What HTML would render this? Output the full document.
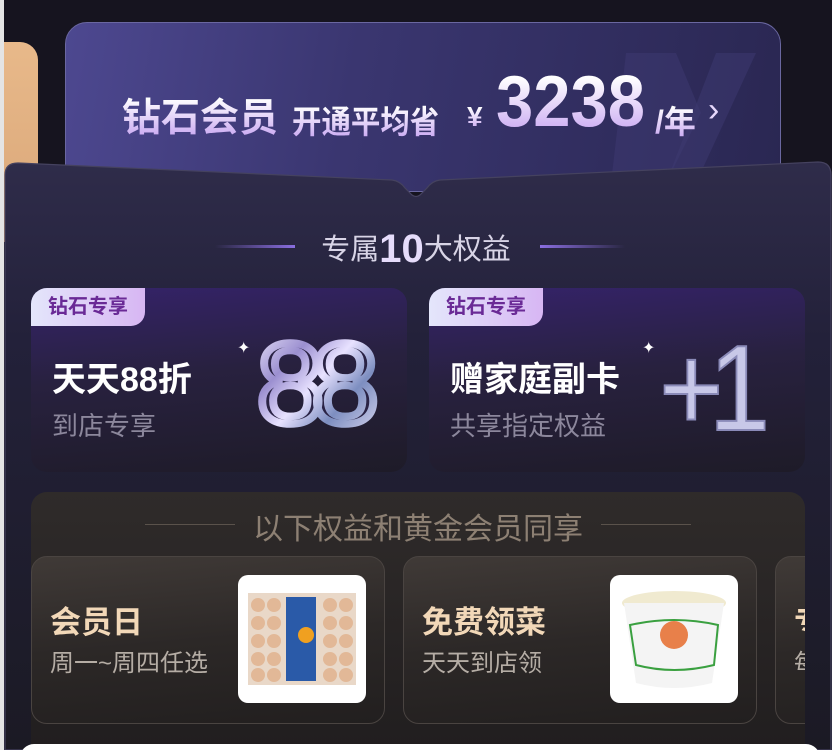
<!DOCTYPE html>
<html><head><meta charset="utf-8"><style>
*{margin:0;padding:0;box-sizing:border-box}
html,body{width:832px;height:750px;overflow:hidden}
body{background:#16141f;font-family:"Liberation Sans","Noto Sans CJK SC",sans-serif;position:relative}
.abs{position:absolute}
.strip{left:0;top:0;width:4px;height:750px;background:#e4e4e4}
.peach{left:4px;top:42px;width:34px;height:200px;background:linear-gradient(180deg,#e8b98a,#d9a678);border-radius:0 18px 0 0}
.top{left:65px;top:22px;width:716px;height:170px;border-radius:22px;background:linear-gradient(100deg,#4d4890 0%,#3a3670 40%,#2a2752 100%);border:1.5px solid #6a67a0}
.gt{background:linear-gradient(180deg,#fff 20%,#c9a8f2 90%);-webkit-background-clip:text;background-clip:text;color:transparent;font-weight:bold;white-space:nowrap}
.h2{left:0;width:832px;top:226px;text-align:center;color:#d8d4e6;font-size:29px}
.card{top:288px;width:376px;height:184px;border-radius:16px;background:linear-gradient(175deg,#35236a 0%,#28213f 45%,#1e1b28 100%);overflow:hidden}
.tag{left:0;top:0;width:114px;height:38px;border-radius:0 0 14px 0;background:linear-gradient(90deg,#e4e6fb,#d7b6f3);color:#6a2a96;font-size:20px;line-height:38px;text-align:center;font-weight:bold}
.ct{left:21px;top:64px;color:#fff;font-size:34px;font-weight:bold;white-space:nowrap}
.cs{left:21px;top:118px;color:#8c879c;font-size:26px;white-space:nowrap}
.low{left:31px;top:492px;width:774px;height:258px;border-radius:16px 16px 0 0;background:linear-gradient(180deg,#2f2b2a,#211e1f);overflow:hidden}
.sub{top:64px;width:354px;height:168px;border-radius:16px;background:linear-gradient(175deg,#403a37 0%,#2c2827 50%,#221f1f 100%);border:1px solid #4a4441;overflow:hidden}
.img{right:18px;top:18px;width:128px;height:128px;background:#fff;border-radius:10px}
.st{left:18px;top:40px;color:#f2d8b8;font-size:31px;font-weight:bold;white-space:nowrap}
.ss{left:18px;top:86px;color:#b5ada5;font-size:24px;white-space:nowrap}
</style></head><body>
<div class="abs strip"></div>
<div class="abs peach"></div>
<div class="abs top">
 <svg class="abs" style="left:540px;top:30px" width="150" height="140"><path d="M20 0 L70 0 L95 60 L60 130 L5 130 Z" fill="#3e3a72" opacity=".5"/><path d="M110 0 L150 0 L90 130 L60 130 Z" fill="#3e3a72" opacity=".5"/></svg>
 <div class="abs gt" style="left:56px;top:64px;font-size:39px">钻石会员</div>
 <div class="abs gt" style="left:226px;top:74px;font-size:32px;transform:scaleX(.92);transform-origin:left">开通平均省</div>
 <div class="abs gt" style="left:401px;top:78px;font-size:28px">¥</div>
 <div class="abs gt" style="left:430px;top:38px;font-size:72px;transform:scaleX(.93);transform-origin:left">3238</div>
 <div class="abs gt" style="left:589px;top:74px;font-size:32px">/年</div>
 <div class="abs" style="left:642px;top:68px;font-size:34px;color:#e6d8fb">›</div>
</div>
<svg class="abs" style="left:0;top:0" width="832" height="750">
 <defs><linearGradient id="pg" x1="0" y1="0" x2="0" y2="1"><stop offset="0" stop-color="#2f2c4a"/><stop offset=".3" stop-color="#23213a"/><stop offset="1" stop-color="#1b1a24"/></linearGradient>
 <linearGradient id="ln" x1="0" x2="1"><stop offset="0" stop-color="#8a6ee0" stop-opacity="0"/><stop offset="1" stop-color="#8a6ee0"/></linearGradient>
 <linearGradient id="ln2" x1="1" x2="0"><stop offset="0" stop-color="#8a6ee0" stop-opacity="0"/><stop offset="1" stop-color="#8a6ee0"/></linearGradient>
 <linearGradient id="dia" x1="0" y1="0" x2="1" y2="1"><stop offset="0" stop-color="#f4f0ff"/><stop offset=".3" stop-color="#9b8fd0"/><stop offset=".5" stop-color="#e8e2ff"/><stop offset=".7" stop-color="#7d8ec0"/><stop offset="1" stop-color="#e0dcf4"/></linearGradient></defs>
 <path d="M5 175 Q5 163 18 163 L392 180 Q400 181 405 188 L412 195 Q416 198 420 195 L427 188 Q432 181 440 180 L818 162 Q831 162 831 175 L831 750 L5 750 Z" fill="url(#pg)" stroke="#45425f" stroke-width="1.2"/>
 <rect x="215" y="245" width="80" height="3" fill="url(#ln)"/>
 <rect x="540" y="245" width="85" height="3" fill="url(#ln2)"/>
</svg>
<div class="abs h2">专属<b style="font-size:40px;color:#e6dcfb;vertical-align:-3px">10</b>大权益</div>
<div class="abs card" style="left:31px">
 <div class="abs tag">钻石专享</div>
 <div class="abs ct">天天88折</div>
 <div class="abs cs">到店专享</div>
 <svg class="abs" style="left:200px;top:40px" width="160" height="110"><text x="26" y="100" font-family="Liberation Sans" font-size="120" fill="#2a2345" stroke="url(#dia)" stroke-width="8" letter-spacing="-12" transform="scale(1 0.95)">88</text><text x="6" y="25" fill="#fff" font-size="16">✦</text></svg>
</div>
<div class="abs card" style="left:429px">
 <div class="abs tag">钻石专享</div>
 <div class="abs ct">赠家庭副卡</div>
 <div class="abs cs">共享指定权益</div>
 <svg class="abs" style="left:205px;top:40px" width="170" height="115"><text x="28" y="102" font-family="Liberation Sans" font-size="122" fill="#c8c8e8" stroke="#8a8ab8" stroke-width="2" letter-spacing="-16" transform="scale(0.9 1)">+1</text><text x="8" y="25" fill="#fff" font-size="16">✦</text></svg>
</div>
<div class="abs low">
 <div class="abs" style="left:114px;top:32px;width:90px;height:1px;background:#5a524b"></div>
 <div class="abs" style="left:570px;top:32px;width:90px;height:1px;background:#5a524b"></div>
 <div class="abs" style="left:0;width:774px;top:12px;text-align:center;color:#8d8073;font-size:30px">以下权益和黄金会员同享</div>
 <div class="abs sub" style="left:0"><div class="abs st">会员日</div><div class="abs ss">周一~周四任选</div>
 <div class="abs img"><svg width="128" height="128"><rect x="10" y="18" width="108" height="92" fill="#e9d8c8"/><g fill="#e2b897"><circle cx="20" cy="30" r="7"/><circle cx="36" cy="30" r="7"/><circle cx="20" cy="48" r="7"/><circle cx="36" cy="48" r="7"/><circle cx="20" cy="66" r="7"/><circle cx="36" cy="66" r="7"/><circle cx="20" cy="84" r="7"/><circle cx="36" cy="84" r="7"/><circle cx="20" cy="100" r="7"/><circle cx="36" cy="100" r="7"/><circle cx="92" cy="30" r="7"/><circle cx="108" cy="30" r="7"/><circle cx="92" cy="48" r="7"/><circle cx="108" cy="48" r="7"/><circle cx="92" cy="66" r="7"/><circle cx="108" cy="66" r="7"/><circle cx="92" cy="84" r="7"/><circle cx="108" cy="84" r="7"/><circle cx="92" cy="100" r="7"/><circle cx="108" cy="100" r="7"/></g><rect x="48" y="22" width="30" height="84" fill="#2a5aa8"/><circle cx="68" cy="60" r="8" fill="#f0a020"/></svg></div></div>
 <div class="abs sub" style="left:372px"><div class="abs st">免费领菜</div><div class="abs ss">天天到店领</div>
 <div class="abs img"><svg width="128" height="128"><ellipse cx="64" cy="28" rx="52" ry="12" fill="#f0ead0"/><path d="M14 28 L26 108 Q64 118 102 108 L114 28 Z" fill="#f4f4f4"/><path d="M20 50 Q64 40 108 50 L104 90 Q64 100 26 90 Z" fill="none" stroke="#3aa040" stroke-width="2"/><circle cx="64" cy="60" r="14" fill="#e8804a"/></svg></div></div>
 <div class="abs sub" style="left:744px"><div class="abs st">专</div><div class="abs ss">每</div></div>
</div>
<div class="abs" style="left:20px;top:744px;width:800px;height:30px;background:#fff;border-radius:14px"></div>
</body></html>
